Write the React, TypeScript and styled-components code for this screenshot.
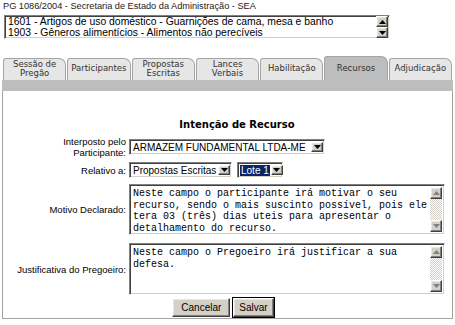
import React from "react";
import styled, { createGlobalStyle } from "styled-components";

const GlobalStyle = createGlobalStyle`
    body {
        margin: 0;
        background: #ffffff;
        font-family: "Liberation Sans", Arial, sans-serif;
        color: #000000;
    }
`;

const tabs = [
    ["Sessão de", "Pregão"],
    ["Participantes"],
    ["Propostas", "Escritas"],
    ["Lances", "Verbais"],
    ["Habilitação"],
    ["Recursos"],
    ["Adjudicação"],
];

const ACTIVE_TAB = 5;

const motivo =
    "Neste campo o participante irá motivar o seu recurso, sendo o mais suscinto possível, pois ele tera 03 (três) dias uteis para apresentar o detalhamento do recurso.";
const justificativa = "Neste campo o Pregoeiro irá justificar a sua defesa.";

const Arrow: React.FC<{ dir: "up" | "down"; color?: string }> = ({ dir, color = "#000" }) => (
    <svg width="7" height="4" viewBox="0 0 7 4">
        {dir === "up"
            ? <polygon points="3.5,0 7,4 0,4" fill={color} />
            : <polygon points="0,0 7,0 3.5,4" fill={color} />}
    </svg>
);

const App: React.FC = () => {
    return (
        <Page>
            <GlobalStyle />
            <Title>PG 1086/2004 - Secretaria de Estado da Administração - SEA</Title>
            <ListBox>
                <ListOptions>
                    <ListOption>1601 - Artigos de uso doméstico - Guarnições de cama, mesa e banho</ListOption>
                    <ListOption>1903 - Gêneros alimentícios - Alimentos não perecíveis</ListOption>
                </ListOptions>
                <ListScroll>
                    <ScrollButton $h={11}><Arrow dir="up" /></ScrollButton>
                    <ScrollButton $h={11}><Arrow dir="down" /></ScrollButton>
                </ListScroll>
            </ListBox>

            <TabBar>
                {tabs.map((lines, i) => (
                    <Tab key={i} $active={i === ACTIVE_TAB}>
                        {lines.map((l) => <TabLine key={l}>{l}</TabLine>)}
                    </Tab>
                ))}
            </TabBar>
            <Band />

            <Panel>
                <Heading>Intenção de Recurso</Heading>

                <Row $top={5}>
                    <Label>Interposto pelo Participante:</Label>
                    <Controls>
                        <Combo $w={196}>
                            <ComboValue>ARMAZEM FUNDAMENTAL LTDA-ME</ComboValue>
                            <ComboButton><Arrow dir="down" /></ComboButton>
                        </Combo>
                    </Controls>
                </Row>

                <Row $top={4}>
                    <Label>Relativo a:</Label>
                    <Controls>
                        <Combo $w={103}>
                            <ComboValue>Propostas Escritas</ComboValue>
                            <ComboButton><Arrow dir="down" /></ComboButton>
                        </Combo>
                        <Combo $w={46}>
                            <ComboValue $selected>Lote 1</ComboValue>
                            <ComboButton><Arrow dir="down" /></ComboButton>
                        </Combo>
                    </Controls>
                </Row>

                <Row $top={6}>
                    <Label>Motivo Declarado:</Label>
                    <TextBox $h={51}>
                        <TextArea defaultValue={motivo} />
                        <VScroll>
                            <ScrollButton $h={12}><Arrow dir="up" color="#808080" /></ScrollButton>
                            <Track />
                            <ScrollButton $h={12}><Arrow dir="down" color="#808080" /></ScrollButton>
                        </VScroll>
                    </TextBox>
                </Row>

                <Row $top={8}>
                    <Label>Justificativa do Pregoeiro:</Label>
                    <TextBox $h={52}>
                        <TextArea defaultValue={justificativa} />
                        <VScroll>
                            <ScrollButton $h={12}><Arrow dir="up" color="#808080" /></ScrollButton>
                            <Track />
                            <ScrollButton $h={12}><Arrow dir="down" color="#808080" /></ScrollButton>
                        </VScroll>
                    </TextBox>
                </Row>

                <Actions>
                    <Button>Cancelar</Button>
                    <Button $default>Salvar</Button>
                </Actions>
            </Panel>
        </Page>
    );
};

const Page = styled.div`
    width: 455px;
    height: 325px;
    overflow: hidden;
`;

const Title = styled.div`
    height: 15px;
    padding-left: 3px;
    font-size: 9.2px;
    line-height: 13px;
    color: #222222;
    white-space: nowrap;
`;

const sunken = `
    border: 1px solid;
    border-color: #808080 #ffffff #ffffff #808080;
    box-shadow: inset 1px 1px #404040, inset -1px -1px #d4d0c8;
    background: #ffffff;
`;

const raised = `
    border: 1px solid;
    border-color: #ffffff #404040 #404040 #ffffff;
    box-shadow: inset -1px -1px #808080, inset 1px 1px #e8e6e2;
    background: #d4d0c8;
`;

const ListBox = styled.div`
    ${sunken}
    display: flex;
    box-sizing: border-box;
    width: 386px;
    height: 24px;
    margin-left: 4px;
    padding: 0 1px 0 2px;
`;

const ListOptions = styled.div`
    flex: 1;
    padding-left: 1px;
    font-size: 10.4px;
    line-height: 11px;
    white-space: nowrap;
    overflow: hidden;
`;

const ListOption = styled.div`
    height: 11px;
`;

const ListScroll = styled.div`
    display: flex;
    flex-direction: column;
    width: 12px;
`;

const ScrollButton = styled.div<{ $h: number }>`
    ${raised}
    box-sizing: border-box;
    display: flex;
    align-items: center;
    justify-content: center;
    height: ${(p) => p.$h}px;
    flex: none;
`;

const TabBar = styled.div`
    display: flex;
    align-items: flex-end;
    gap: 1px;
    height: 24px;
    margin: 17px 3px 0 3px;
`;

const Tab = styled.div<{ $active?: boolean }>`
    flex: 1;
    box-sizing: border-box;
    height: ${(p) => (p.$active ? 24 : 22)}px;
    display: flex;
    flex-direction: column;
    align-items: center;
    justify-content: center;
    padding-bottom: ${(p) => (p.$active ? 1 : 2)}px;
    border: 1px solid #a4a4a4;
    border-bottom: none;
    border-radius: 3px 7px 0 0;
    background: ${(p) => (p.$active ? "#bdbdbd" : "#e6e6e6")};
    font-family: "DejaVu Sans", Verdana, sans-serif;
    font-size: 8.5px;
    color: #333333;
`;

const TabLine = styled.span`
    line-height: 8.5px;
    white-space: nowrap;
`;

const Band = styled.div`
    height: 11px;
    margin: 0 2px;
    background: #bdbdbd;
`;

const Panel = styled.div`
    box-sizing: border-box;
    height: 228px;
    margin: 0 2px;
    padding: 27px 8px 0 1px;
    border: 1px solid #a4a4a4;
    border-top: none;
`;

const Heading = styled.div`
    padding-left: 26px;
    text-align: center;
    font-family: "DejaVu Sans", Verdana, sans-serif;
    font-size: 10px;
    font-weight: 700;
    line-height: 13px;
`;

const Row = styled.div<{ $top: number }>`
    display: grid;
    grid-template-columns: 122px 1fr;
    column-gap: 3px;
    align-items: center;
    margin-top: ${(p) => p.$top}px;
`;

const Label = styled.div`
    justify-self: end;
    max-width: 112px;
    text-align: right;
    font-size: 9.5px;
    line-height: 11px;
`;

const Controls = styled.div`
    display: flex;
    gap: 5px;
`;

const Combo = styled.div<{ $w: number }>`
    ${sunken}
    display: flex;
    align-items: stretch;
    box-sizing: border-box;
    width: ${(p) => p.$w}px;
    height: 16px;
    padding: 2px 1px 2px 2px;
`;

const ComboValue = styled.span<{ $selected?: boolean }>`
    flex: 1;
    align-self: center;
    margin-right: 1px;
    padding: 0 1px;
    font-size: 10px;
    line-height: 11px;
    white-space: nowrap;
    color: ${(p) => (p.$selected ? "#ffffff" : "#000000")};
    background: ${(p) => (p.$selected ? "#0a246a" : "transparent")};
`;

const ComboButton = styled.span`
    ${raised}
    box-sizing: border-box;
    display: flex;
    align-items: center;
    justify-content: center;
    width: 12px;
    flex: none;
`;

const TextBox = styled.div<{ $h: number }>`
    ${sunken}
    display: flex;
    box-sizing: border-box;
    width: 316px;
    height: ${(p) => p.$h}px;
    padding: 2px;
`;

const TextArea = styled.textarea`
    flex: 1;
    margin: 0;
    padding: 1px 1px;
    border: none;
    outline: none;
    resize: none;
    overflow: hidden;
    background: transparent;
    font-family: "Liberation Mono", "Courier New", monospace;
    font-size: 10px;
    line-height: 11.5px;
    color: #000000;
`;

const VScroll = styled.div`
    display: flex;
    flex-direction: column;
    width: 12px;
    flex: none;
`;

const Track = styled.div`
    flex: 1;
    background-color: #ffffff;
    background-image: repeating-conic-gradient(#d4d0c8 0 25%, #ffffff 0 50%);
    background-size: 2px 2px;
`;

const Actions = styled.div`
    display: flex;
    justify-content: center;
    gap: 3px;
    margin-top: 3px;
    padding-right: 2px;
`;

const Button = styled.button<{ $default?: boolean }>`
    ${raised}
    box-sizing: border-box;
    height: 19px;
    padding: 0 ${(p) => (p.$default ? 5 : 8)}px;
    font-family: "Liberation Sans", Arial, sans-serif;
    font-size: 10px;
    color: #000000;
    ${(p) => (p.$default ? "outline: 1px solid #000000;" : "")}
`;

export default App;
